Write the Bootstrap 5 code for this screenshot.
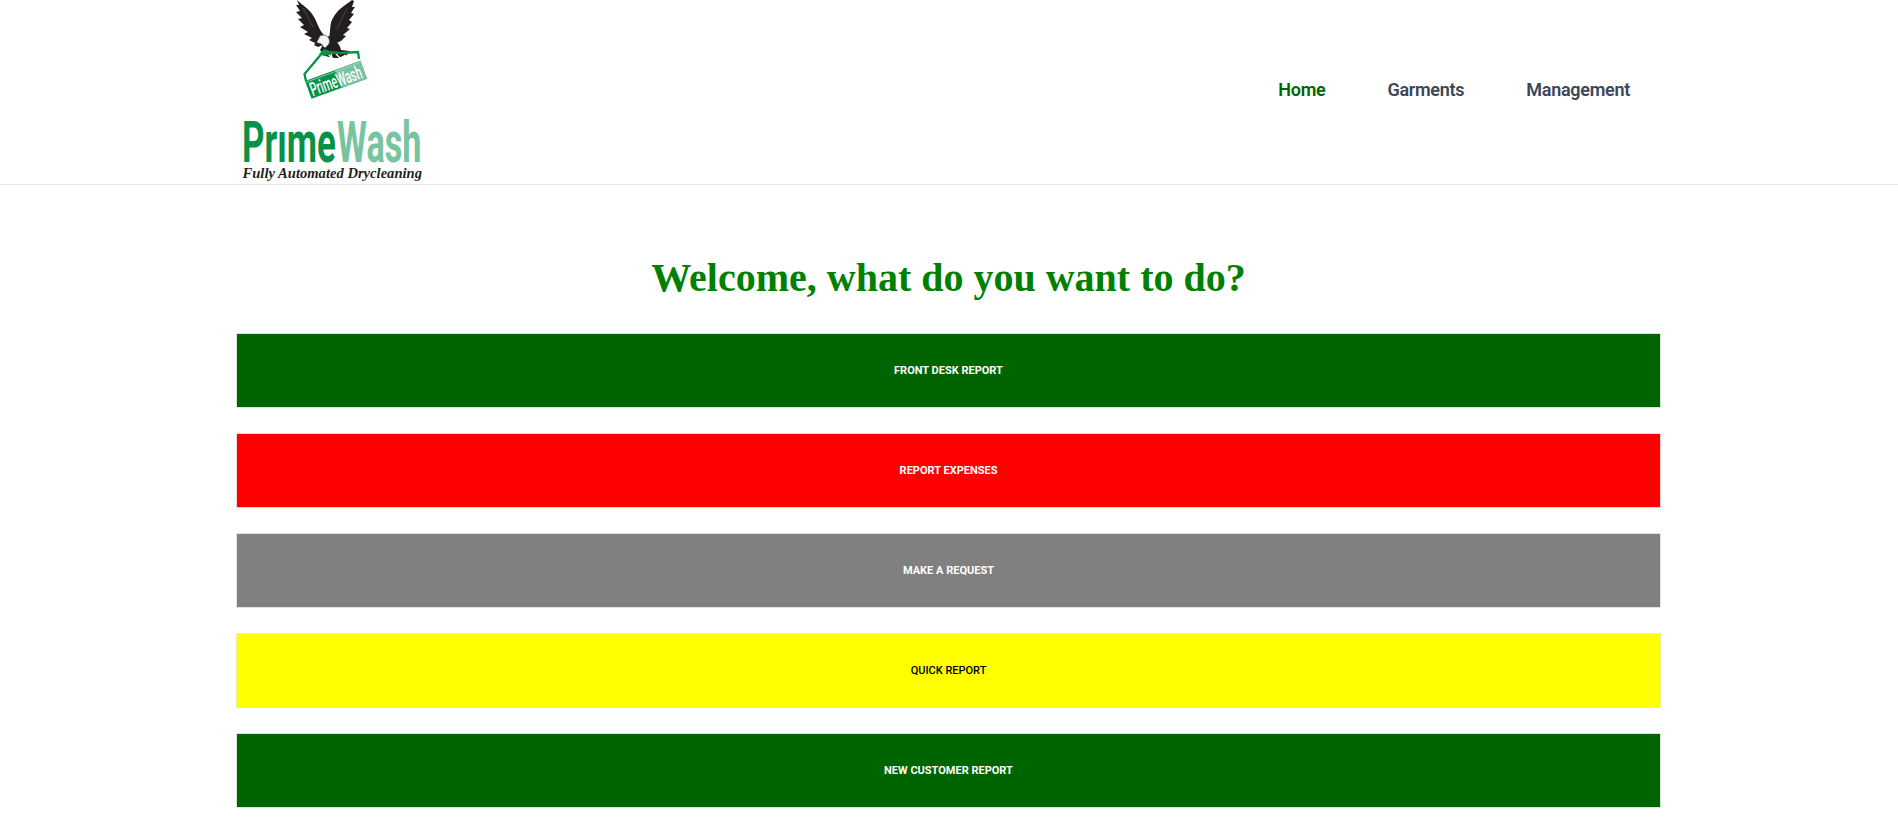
<!DOCTYPE html>
<html lang="en">
<head>
<meta charset="utf-8">
<meta name="viewport" content="width=device-width, initial-scale=1">
<title>PrimeWash</title>
<link href="https://cdn.jsdelivr.net/npm/bootstrap@5.3.0/dist/css/bootstrap.min.css" rel="stylesheet">
<style>
body{font-family:Roboto,sans-serif;background:#fff;overflow:hidden;padding-right:1px}
.page-width{width:1425px}
.site-header{height:185px;border-bottom:1px solid #e7e7e7;margin-right:-1px;padding-right:1px}
.brand-logo{width:200px;height:184px}
.main-nav{gap:62px;padding-right:31px;padding-bottom:5px}
.main-nav .nav-link{font-size:18px;line-height:27px;font-weight:600;color:#3b4658;letter-spacing:-.28px}
.main-nav .nav-link.active{color:#006400}
.welcome{font:bold 40px/48px "Liberation Serif",serif;color:green;margin:69px 0 31px}
.action-list{gap:25px}
.action{height:75px;padding-top:8px;border:1px solid #e3e3e3;border-radius:0;font-size:11px;font-weight:700;color:#fff}
.action:hover{color:#fff}
.bg-desk{background:#006400!important;border-color:#d5e8d5}
.bg-expense{background:red!important;border-color:#f5d5d5}
.bg-request{background:gray!important}
.bg-quick{background:#ff0!important;border-color:#eeeea0;color:#000;font-weight:500}
</style>
</head>
<body>
<header class="site-header">
<div class="page-width mx-auto h-100 d-flex justify-content-between align-items-center">
<a href="#" class="d-block" aria-label="PrimeWash">
<svg class="brand-logo d-block" viewBox="236 0 200 184">
<!-- eagle wings and body -->
<path fill="#231f20" d="M297 0C302 5 310 9 314 17C318 24 319 30 324 35L320 38L317 44L309 40L312 38L304 34L308 32L300 27L304 25L298 19L302 18L296 12L300 11L296 5L299 5Z"/>
<path fill="#231f20" d="M352 0C344 6 337 10 333 18C329 25 331 31 329 37L332 45L341 41L346 36L343 35L350 29L347 28L352 22L349 20L354 14L351 13L355 7L352 7L354 1Z"/>
<path d="M303 8L313 27M347 8L337 29" stroke="#5b5657" stroke-width=".7"/>
<path fill="#231f20" d="M328 36C335 39 340 44 341 50L350 51L347 55L340 58L334 58L325 56L320 50Z"/>
<path fill="#f3f3f3" stroke="#666" stroke-width=".8" d="M320 36C326 33 331 38 329 44L325 48L320 43L316 44Z"/>
<path d="M316 42L314 45L318 47L323 45" fill="#231f20"/>
<path d="M328 54L332 58L331 53M336 54L340 58L346 55" fill="none" stroke="#fff" stroke-width="1.3"/>
<!-- hanger -->
<path d="M323 52L304.500 74L306 81M325 52L341 53L358 52L359 59" fill="none" stroke="#079247" stroke-width="2.300"/>
<path d="M319 54L324 49L336 53L324 56Z" fill="#079247"/>
<!-- hanging sign -->
<g transform="translate(305 81) rotate(-20)">
<rect width="59" height="19" fill="#079247"/><rect x="32" width="27" height="19" fill="#78c3a0"/>
<path d="M0 1.500H59" stroke="#a5d8bd" stroke-width=".7"/>
<text x="2" y="17" fill="#fff" font-family="Roboto,sans-serif" font-size="19" font-weight="500" textLength="54" lengthAdjust="spacingAndGlyphs">PrimeWash</text>
</g>
<!-- word mark -->
<g font-family="Roboto,sans-serif" font-size="58" font-weight="700" stroke-linejoin="round">
<text x="242" y="161.500" fill="#079247" textLength="94" lengthAdjust="spacingAndGlyphs">Prıme</text>
<text x="337" y="161.500" fill="#78c3a0" textLength="84.500" lengthAdjust="spacingAndGlyphs">Wash</text>
</g>
<text x="242.500" y="178" fill="#231f20" font-family="'Liberation Serif',serif" font-size="14" font-style="italic" font-weight="700" textLength="179.500" lengthAdjust="spacingAndGlyphs">Fully Automated Drycleaning</text>
</svg>
</a>
<nav class="main-nav nav">
<a class="nav-link active p-0" href="#">Home</a>
<a class="nav-link p-0" href="#">Garments</a>
<a class="nav-link p-0" href="#">Management</a>
</nav>
</div>
</header>
<main class="page-width mx-auto">
<h1 class="welcome text-center">Welcome, what do you want to do?</h1>
<div class="action-list d-flex flex-column">
<a href="#" class="action btn bg-desk d-flex align-items-center justify-content-center">FRONT DESK REPORT</a>
<a href="#" class="action btn bg-expense d-flex align-items-center justify-content-center">REPORT EXPENSES</a>
<a href="#" class="action btn bg-request d-flex align-items-center justify-content-center">MAKE A REQUEST</a>
<a href="#" class="action btn bg-quick d-flex align-items-center justify-content-center">QUICK REPORT</a>
<a href="#" class="action btn bg-desk d-flex align-items-center justify-content-center">NEW CUSTOMER REPORT</a>
</div>
</main>
<script src="https://cdn.jsdelivr.net/npm/bootstrap@5.3.0/dist/js/bootstrap.bundle.min.js"></script>
</body>
</html>
